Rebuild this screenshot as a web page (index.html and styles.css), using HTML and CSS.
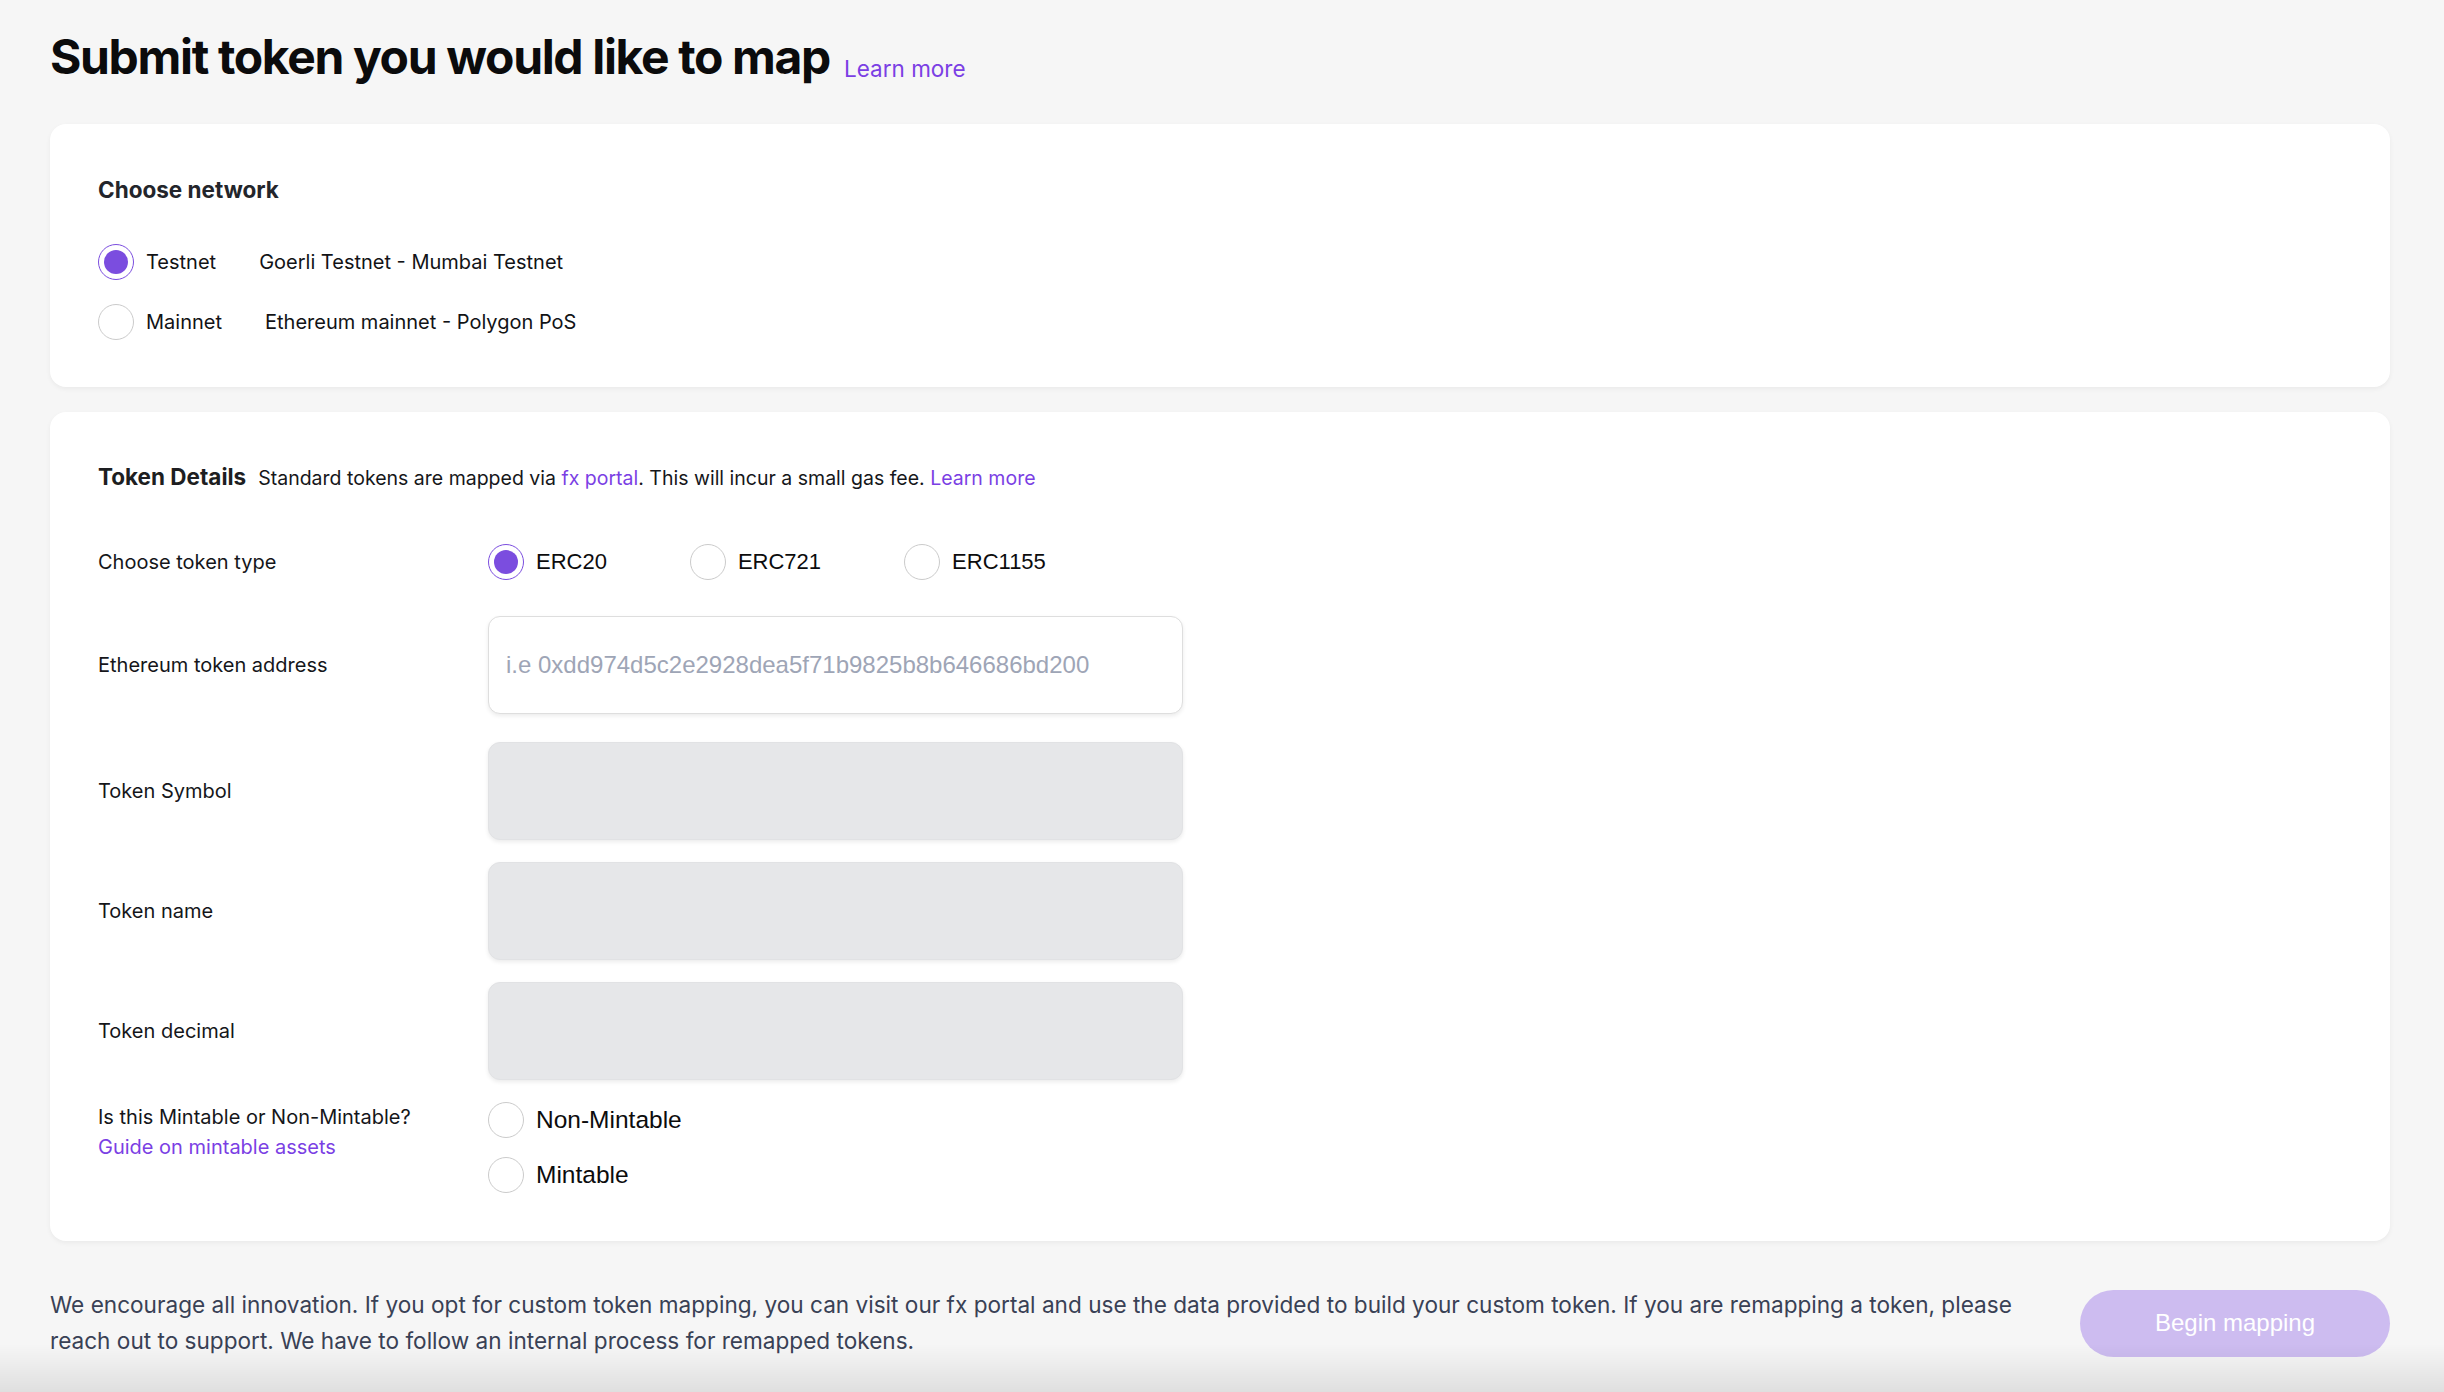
FILE: index.html
```html
<!DOCTYPE html>
<html lang="en">
<head>
<meta charset="utf-8">
<title>Submit token you would like to map</title>
<link rel="stylesheet" href="styles.css">
</head>
<body>
<div class="page">
  <header class="page-header">
    <h1 class="title">Submit token you would like to map</h1>
    <a class="link header-link" href="#">Learn more</a>
  </header>

  <section class="card card-network">
    <h2 class="card-title">Choose network</h2>
    <div class="network-list">
      <label class="network-option">
        <span class="radio checked"></span>
        <span class="network-name">Testnet</span>
        <span class="network-desc">Goerli Testnet - Mumbai Testnet</span>
      </label>
      <label class="network-option">
        <span class="radio"></span>
        <span class="network-name">Mainnet</span>
        <span class="network-desc">Ethereum mainnet - Polygon PoS</span>
      </label>
    </div>
  </section>

  <section class="card card-details">
    <div class="details-head">
      <h2 class="card-title">Token Details</h2>
      <p class="details-desc">Standard tokens are mapped via <a class="link" href="#">fx portal</a>. This will incur a small gas fee. <a class="link" href="#">Learn more</a></p>
    </div>

    <div class="form">
      <div class="row row-type">
        <span class="field-label">Choose token type</span>
        <div class="type-options">
          <label class="option"><span class="radio checked"></span><span class="option-text">ERC20</span></label>
          <label class="option"><span class="radio"></span><span class="option-text">ERC721</span></label>
          <label class="option"><span class="radio"></span><span class="option-text">ERC1155</span></label>
        </div>
      </div>

      <div class="row row-address">
        <span class="field-label">Ethereum token address</span>
        <input class="text-input" type="text" placeholder="i.e 0xdd974d5c2e2928dea5f71b9825b8b646686bd200">
      </div>

      <div class="row">
        <span class="field-label">Token Symbol</span>
        <input class="text-input" type="text" disabled>
      </div>

      <div class="row">
        <span class="field-label">Token name</span>
        <input class="text-input" type="text" disabled>
      </div>

      <div class="row">
        <span class="field-label">Token decimal</span>
        <input class="text-input" type="text" disabled>
      </div>

      <div class="row row-mint">
        <div class="field-label mint-label">
          <span>Is this Mintable or Non-Mintable?</span>
          <a class="link" href="#">Guide on mintable assets</a>
        </div>
        <div class="mint-options">
          <label class="option"><span class="radio"></span><span class="option-text mint-text">Non-Mintable</span></label>
          <label class="option"><span class="radio"></span><span class="option-text mint-text">Mintable</span></label>
        </div>
      </div>
    </div>
  </section>

  <footer class="page-footer">
    <p class="footer-text">We encourage all innovation. If you opt for custom token mapping, you can visit our fx portal and use the data provided to build your custom token. If you are remapping a token, please reach out to support. We have to follow an internal process for remapped tokens.</p>
    <button class="primary-btn" type="button">Begin mapping</button>
  </footer>
</div>
<div class="bottom-shade"></div>
</body>
</html>
```

FILE: styles.css
```css
* { box-sizing: border-box; }

html, body {
  margin: 0;
  padding: 0;
}

body {
  background: #f6f6f6;
  font-family: "Inter", "Liberation Sans", sans-serif;
  color: #111214;
  min-height: 1392px;
}

.page {
  padding: 28px 54px 0 50px;
}

.link {
  color: #7b3fe4;
  text-decoration: none;
}

/* Header */
.page-header {
  display: flex;
  align-items: baseline;
  gap: 14px;
}

.title {
  margin: 0;
  font-size: 48px;
  line-height: 58px;
  font-weight: 700;
  letter-spacing: -1.35px;
  color: #0b0b0c;
}

.header-link {
  font-size: 22.5px;
  position: relative;
  top: 3px;
}

/* Cards */
.card {
  background: #ffffff;
  border-radius: 16px;
  box-shadow: 0 2px 5px rgba(0, 0, 0, 0.05);
}

.card-title {
  margin: 0;
  font-size: 22.5px;
  line-height: 28px;
  font-weight: 700;
  color: #23252b;
}

.card-network {
  margin-top: 38px;
  padding: 52px 48px 47px;
}

.network-list {
  margin-top: 40px;
  display: flex;
  flex-direction: column;
  gap: 24px;
}

.network-option {
  display: flex;
  align-items: center;
  font-size: 20px;
  color: #121316;
}

.network-name {
  margin-left: 12px;
}

.network-desc {
  margin-left: 43px;
}

/* Radio */
.radio {
  flex: none;
  width: 36px;
  height: 36px;
  border-radius: 50%;
  border: 1px solid #cbcbcb;
  background: #fff;
  display: inline-flex;
  align-items: center;
  justify-content: center;
}

.radio.checked {
  border: 1.5px solid #7b4ddf;
}

.radio.checked::after {
  content: "";
  width: 24px;
  height: 24px;
  border-radius: 50%;
  background: #7b4ddf;
}

/* Details card */
.card-details {
  margin-top: 25px;
  padding: 51px 48px 48px;
}

.details-head {
  display: flex;
  align-items: baseline;
  gap: 12px;
}

.details-head .card-title {
  color: #1d1e21;
}

.details-desc {
  margin: 0;
  font-size: 19.5px;
  color: #16171a;
}

.form {
  margin-top: 53px;
  display: flex;
  flex-direction: column;
  gap: 22px;
}

.row {
  display: flex;
  align-items: center;
}

.row-type { margin-bottom: 14px; }
.row-address { margin-bottom: 6px; }
.row-mint { align-items: flex-start; }

.field-label {
  flex: none;
  width: 390px;
  font-size: 20px;
  color: #15161a;
}

.mint-label {
  display: flex;
  flex-direction: column;
  line-height: 30px;
}

.type-options {
  display: flex;
  align-items: center;
  gap: 83px;
}

.option {
  display: flex;
  align-items: center;
  gap: 12px;
}

.option-text {
  font-family: "Liberation Sans", Arial, sans-serif;
  font-size: 22px;
  color: #0c0c0d;
}

.mint-text {
  font-size: 24.5px;
}

.mint-options {
  display: flex;
  flex-direction: column;
  gap: 19px;
}

.text-input {
  width: 695px;
  height: 98px;
  border: 1px solid #dedede;
  border-radius: 12px;
  background: #ffffff;
  box-shadow: 0 2px 4px rgba(0, 0, 0, 0.08);
  padding: 0 17px;
  font-family: "Liberation Sans", Arial, sans-serif;
  font-size: 24px;
  color: #111;
  outline: none;
}

.text-input::placeholder {
  color: #9ea5b6;
}

.text-input:disabled {
  background: #e6e7e9;
  border-color: #e1e2e4;
}

/* Footer */
.page-footer {
  margin-top: 46px;
  display: flex;
  align-items: center;
  gap: 40px;
}

.footer-text {
  flex: 1;
  margin: 0;
  font-size: 22.6px;
  line-height: 36px;
  color: #394155;
}

.primary-btn {
  flex: none;
  width: 310px;
  height: 67px;
  border: none;
  border-radius: 34px;
  background: #cdbcf0;
  color: #ffffff;
  font-family: "Liberation Sans", Arial, sans-serif;
  font-size: 24px;
}

.bottom-shade {
  position: fixed;
  left: 0;
  right: 0;
  bottom: 0;
  height: 48px;
  background: linear-gradient(to bottom, rgba(0, 0, 0, 0), rgba(0, 0, 0, 0.09));
  pointer-events: none;
}
```
